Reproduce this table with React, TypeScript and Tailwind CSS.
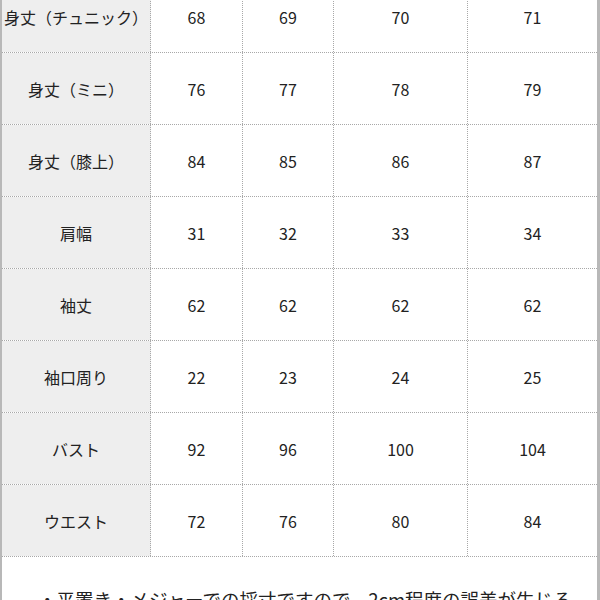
const rows: [string, string[]][] = [
  ['身丈（チュニック）', ['68', '69', '70', '71']],
  ['身丈（ミニ）', ['76', '77', '78', '79']],
  ['身丈（膝上）', ['84', '85', '86', '87']],
  ['肩幅', ['31', '32', '33', '34']],
  ['袖丈', ['62', '62', '62', '62']],
  ['袖口周り', ['22', '23', '24', '25']],
  ['バスト', ['92', '96', '100', '104']],
  ['ウエスト', ['72', '76', '80', '84']],
];

const widths = ['w-[92px]', 'w-[91px]', 'w-[134px]'];

export default function App() {
  return (
    <div
      className="w-[600px] h-[600px] overflow-hidden bg-white border-l-2 border-r-[3px] border-[#b8b8b8] text-[#222]"
      style={{ fontFamily: '"Noto Sans CJK JP", "Noto Sans", sans-serif' }}
    >
      <div className="mt-[-19px]">
        {rows.map(([label, vals]) => (
          <div key={label} className="flex h-[72px] border-b border-dotted border-[#a8a8a8]">
            <div className="w-[149px] shrink-0 flex items-center justify-center bg-[#eeeeee] border-r border-dotted border-[#a8a8a8] text-[16px] whitespace-nowrap">
              {label}
            </div>
            {vals.map((v, i) => (
              <div
                key={i}
                className={`${i < 3 ? widths[i] + ' border-r border-dotted border-[#a8a8a8]' : 'flex-1'} shrink-0 flex items-center justify-center text-[16px]`}
              >
                {v}
              </div>
            ))}
          </div>
        ))}
      </div>
      <p className="pt-[33px] pl-[36px] text-[18.5px] whitespace-nowrap leading-none">
        ・平置き・メジャーでの採寸ですので、2cm程度の誤差が生じる
      </p>
    </div>
  );
}
